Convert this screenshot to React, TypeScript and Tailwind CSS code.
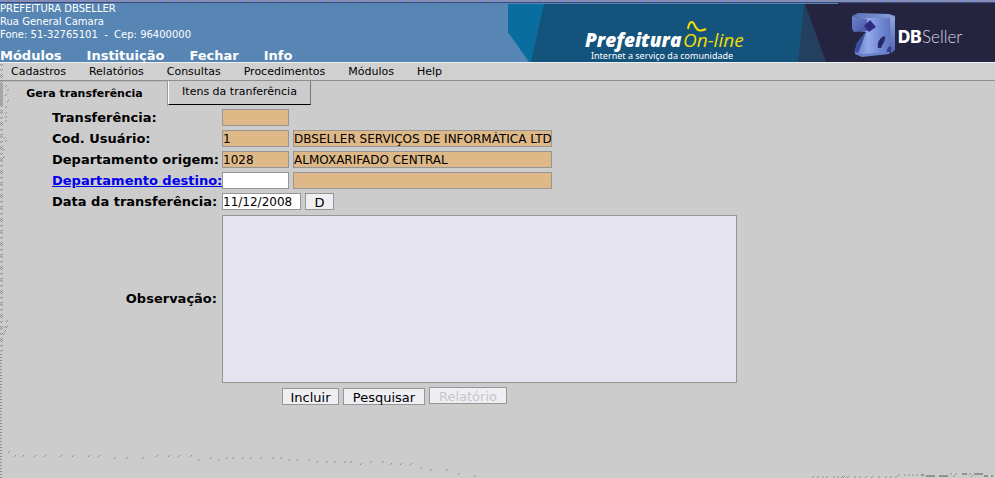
import type { InputHTMLAttributes, ReactNode } from 'react';

const sections = ['Módulos', 'Instituição', 'Fechar', 'Info'];
const menus = ['Cadastros', 'Relatórios', 'Consultas', 'Procedimentos', 'Módulos', 'Help'];

function Banner() {
  return (
    <svg className="block h-[62px] w-[487px] shrink-0" viewBox="508 0 487 62" role="img" aria-label="Prefeitura On-line, DBSeller">
      <defs>
        <linearGradient id="body" x1="0" y1="0" x2="1" y2="0">
          <stop offset="0" stopColor="#5f7ac6" />
          <stop offset="0.35" stopColor="#93a9ea" />
          <stop offset="0.7" stopColor="#6f86d0" />
          <stop offset="1" stopColor="#5b6fb8" />
        </linearGradient>
        <linearGradient id="top" x1="0" y1="0" x2="1" y2="0">
          <stop offset="0" stopColor="#5c6fb4" />
          <stop offset="1" stopColor="#8aa0dc" />
        </linearGradient>
        <linearGradient id="small" x1="0" y1="0" x2="1" y2="1">
          <stop offset="0" stopColor="#7086cc" />
          <stop offset="1" stopColor="#4254a4" />
        </linearGradient>
        <linearGradient id="side" x1="0" y1="0" x2="0" y2="1">
          <stop offset="0" stopColor="#8fa6e0" />
          <stop offset="1" stopColor="#4c62ae" />
        </linearGradient>
      </defs>
      <path d="M508 4H806V62H530L508 32Z" fill="#14547c" />
      <path d="M508 4H544L531 62H529L508 32Z" fill="#0a6da0" />
      <path d="M804 4H812L828 62H798Z" fill="#24405f" />
      <path d="M805 4H838V2H995V62H826Z" fill="#252440" />
      <path d="M852 16L858 13L889 14L895 16L890 19L859 18Z" fill="url(#top)" />
      <path d="M859 18H891L893 52L887 54L862 56L855 52L857 43L866 32L859 31Z" fill="url(#body)" />
      <path d="M890 18L895 16V50L891 53Z" fill="url(#side)" />
      <path d="M852 16L859 18L867 19V31L854 32L852 29Z" fill="url(#small)" />
      <path d="M866 32L857 43L854 52L857 55L861 46Z" fill="#3b4f9c" />
      <path d="M870 20L876 27L869 32L864 26Z" fill="#302b80" />
      <path d="M878 48C877 42 880 37 885 36C886 40 883 43 881 48Z" fill="#252a66" />
      <path d="M887 53C886 49 889 46 891 46V53Z" fill="#343e86" />
      <path d="M855 52L862 54L890 52L889 54L862 57L855 54Z" fill="#6c82ca" />
      <text x="585" y="47" fontSize="19" fontStyle="italic" fontWeight="800" fill="#fff" fontFamily="'Open Sans', sans-serif">Prefeitura</text>
      <text x="683" y="47" fontSize="19" fontStyle="italic" fill="#f3dc00" fontFamily="'Open Sans', sans-serif">On-line</text>
      <text x="591" y="59" fontSize="9" fill="#fff" fontFamily="'Noto Sans', sans-serif">Internet a serviço da comunidade</text>
      <path d="M688 29C689 22 692 20 694 24C697 31 700 32 706 29" fill="none" stroke="#f3dc00" strokeWidth="2" />
      <text x="898" y="43" fontSize="17" fontWeight="800" fill="#fff" fontFamily="Inter, sans-serif">DB</text>
      <text x="922" y="43" fontSize="17" fontWeight="300" fill="#d5d6e4" fontFamily="Lato, sans-serif">Seller</text>
    </svg>
  );
}

function Field({ label, id, className, ...rest }: { label: string; id: string } & InputHTMLAttributes<HTMLInputElement>) {
  return (
    <input
      id={id}
      aria-label={label}
      className={`h-[17px] rounded-none border border-[#969696] pt-px text-[12px] leading-[14px] outline-none ${className ?? ''}`}
      {...rest}
    />
  );
}

function Row({ label, htmlFor, children }: { label: string; htmlFor: string; children: ReactNode }) {
  return (
    <>
      <label htmlFor={htmlFor} className="text-[13px] leading-[17px] font-bold whitespace-nowrap">{label}</label>
      <div className="flex gap-1">{children}</div>
    </>
  );
}

// Positions of the dither specks along the window's left and bottom edges.
const leftSpecks = Array.from({ length: 72 }, (_, i) => 64 + i * 4 + (i % 3)).filter((y) => y < 354);
const looseSpecks = [
  [5, 86], [7, 90], [5, 95], [7, 101], [5, 107], [5, 113], [5, 117], [5, 121], [4, 138], [5, 141], [3, 150], [3, 157],
  [6, 321], [4, 327], [6, 327], [4, 331], [3, 334],
];
const bottomSpecks = [
  [8, 452], [14, 456], [22, 456], [34, 456], [44, 456], [60, 456], [72, 456], [88, 456], [98, 456], [114, 458],
  [126, 458], [142, 458], [156, 456], [168, 456], [178, 456], [190, 456], [198, 460], [210, 458], [218, 460],
  [226, 458], [232, 458], [242, 458], [250, 458], [260, 458], [272, 458], [280, 458], [288, 460], [296, 460],
  [308, 460], [316, 462], [326, 462], [334, 462], [344, 462], [350, 462], [360, 464], [370, 462], [382, 462],
  [390, 464], [400, 464], [410, 464], [420, 468], [430, 470], [446, 470], [458, 474], [474, 476],
  [812, 477], [817, 477], [822, 477], [826, 477], [833, 477], [837, 477], [841, 477], [843, 477], [847, 477],
  [854, 477], [859, 477], [865, 477], [871, 477], [878, 477], [885, 477], [890, 477], [895, 477],
  [898, 475], [904, 475], [908, 475], [912, 475], [916, 475], [950, 474], [953, 476], [955, 474], [969, 474], [971, 476],
];

function EdgeGrain() {
  return (
    <svg className="pointer-events-none absolute top-0 left-0" width="995" height="478" viewBox="0 0 995 478" aria-hidden="true" shapeRendering="crispEdges">
      <g fill="#929292">
        {leftSpecks.map((y) => <path key={y} d={`M0 ${y}h1v1h-1zM1 ${y + 1}h1v1h-1zM2 ${y}h1v1h-1z`} />)}
        {[...looseSpecks, ...bottomSpecks].map(([x, y]) => <path key={`${x}-${y}`} d={`M${x} ${y}h1v1h-1zM${x + 1} ${y - 1}h1v1h-1z`} />)}
        <path d="M921 474h3v2h-3zM926 475h9v2h-9zM939 475h9v2h-9zM962 473h5v2h-5zM974 473h9v2h-9zM984 475h4v2h-4zM991 475h2v2h-2z" />
        <path d="M0 83h3v22h-3z" fill="#a6a6a6" />
      </g>
      <path d="M1 354v124" stroke="#8c8c8c" strokeWidth="2" strokeDasharray="1 2" />
    </svg>
  );
}

const locked = 'bg-[#deb887]';
const button = 'h-[17px] border border-[#969696] bg-[#eeeef3] text-[13px] leading-[17px]';

export default function App() {
  return (
    <div className="relative min-h-screen overflow-hidden bg-[#cccccc] font-['DejaVu_Sans',sans-serif] text-black">
      <header className="relative flex h-[62px] justify-between bg-[#5786b4]">
        <div className="absolute inset-x-0 top-0 h-[3px] border-b border-[#3c4a80] bg-[repeating-linear-gradient(90deg,#7d8fc4_0px,#7d8fc4_7px,#8f8b95_7px,#8f8b95_10px)]" />
        <div className="flex flex-col justify-between pt-[2px]">
          <address className="text-[10px] leading-[13px] text-white not-italic">
            PREFEITURA DBSELLER<br />
            Rua General Camara<br />
            Fone: 51-32765101 &nbsp;- &nbsp;Cep: 96400000
          </address>
          <nav className="flex gap-[25px] text-[13px] leading-[12px] font-bold text-white">
            {sections.map((s) => <a key={s} href="#">{s}</a>)}
          </nav>
        </div>
        <Banner />
      </header>

      <nav className="flex h-[19px] gap-[23px] border-t border-b border-t-[#f0f0f0] border-b-[#8e8e8e] bg-[#d0d0d0] pl-[11px] text-[11px] leading-[17px]">
        {menus.map((m) => <a key={m} href="#">{m}</a>)}
      </nav>

      <div role="tablist" className="flex h-[25px] pl-[2px] text-[11px]">
        <button role="tab" aria-selected="true" className="h-[25px] w-[166px] border-t border-r border-t-[#bbb] border-r-[#999] font-bold">
          Gera transferência
        </button>
        <button role="tab" aria-selected="false" className="h-[24px] w-[143px] border-r border-b border-l border-r-[#777] border-b-black border-l-white">
          Itens da tranferência
        </button>
      </div>

      <form className="pt-[3px] pl-[52px]" onSubmit={(e) => e.preventDefault()}>
        <div className="grid grid-cols-[166px_1fr] gap-1">
          <Row label="Transferência:" htmlFor="transferencia">
            <Field id="transferencia" label="Transferência" readOnly className={`${locked} w-[67px]`} />
          </Row>
          <Row label="Cod. Usuário:" htmlFor="usuario">
            <Field id="usuario" label="Cod. Usuário" readOnly defaultValue="1" className={`${locked} w-[67px]`} />
            <Field id="usuario-nome" label="Nome do usuário" readOnly defaultValue="DBSELLER SERVIÇOS DE INFORMÁTICA LTDA" className={`${locked} w-[259px]`} />
          </Row>
          <Row label="Departamento origem:" htmlFor="origem">
            <Field id="origem" label="Departamento origem" readOnly defaultValue="1028" className={`${locked} w-[67px]`} />
            <Field id="origem-nome" label="Nome do departamento origem" readOnly defaultValue="ALMOXARIFADO CENTRAL" className={`${locked} w-[259px]`} />
          </Row>
          <a href="#" className="text-[13px] leading-[17px] font-bold whitespace-nowrap text-[#0000ee] underline">Departamento destino:</a>
          <div className="flex gap-1">
            <Field id="destino" label="Departamento destino" className="w-[67px] bg-white" />
            <Field id="destino-nome" label="Nome do departamento destino" readOnly className={`${locked} w-[259px]`} />
          </div>
          <Row label="Data da transferência:" htmlFor="data">
            <Field id="data" label="Data da transferência" defaultValue="11/12/2008" className="w-[79px] bg-white" />
            <button type="button" className={`${button} w-[29px]`}>D</button>
          </Row>
          <label htmlFor="observacao" className="self-center pr-px text-right text-[13px] leading-[17px] font-bold">Observação:</label>
          <textarea id="observacao" className="mt-px block h-[168px] w-[515px] resize-none border border-[#969696] bg-[#e5e3f0] text-[12px] outline-none" />
        </div>
        <div className="flex gap-1 pt-1 pl-[230px]">
          <button type="submit" className={`${button} mt-px w-[57px]`}>Incluir</button>
          <button type="button" className={`${button} mt-px w-[82px]`}>Pesquisar</button>
          <button type="button" disabled className={`${button} w-[78px] text-[#c6c6cb]`}>Relatório</button>
        </div>
      </form>
      <EdgeGrain />
    </div>
  );
}
